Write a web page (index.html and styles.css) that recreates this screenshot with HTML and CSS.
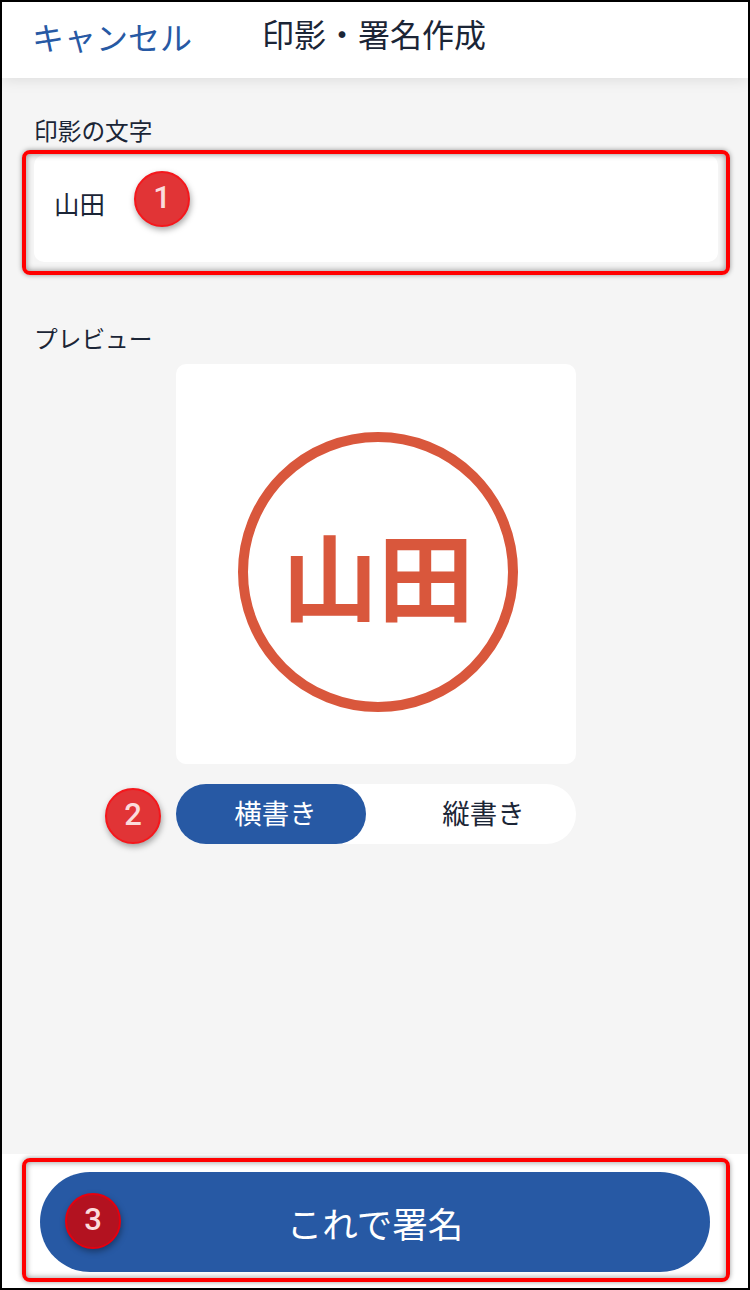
FILE: index.html
```html
<!DOCTYPE html>
<html lang="ja">
  <head>
    <meta charset="UTF-8" />
    <meta name="viewport" content="width=device-width, initial-scale=1.0" />
    <title>印影・署名作成</title>
    <link rel="stylesheet" href="styles.css">
  </head>
  <body>
    <div class="frame">
      <header class="header">
        <span class="cancel">キャンセル</span>
        <h1 class="title">印影・署名作成</h1>
      </header>
      <main class="main">
        <p class="label">印影の文字</p>
        <div class="input">山田</div>
        <p class="label label-preview">プレビュー</p>
        <div class="preview">
          <div class="stamp">山田</div>
        </div>
        <div class="toggle">
          <span class="option active">横書き</span>
          <span class="option">縦書き</span>
        </div>
      </main>
      <footer class="footer">
        <button class="submit">これで署名</button>
      </footer>

      <!-- annotations over the screenshot -->
      <div class="mark mark-input"></div>
      <div class="mark mark-submit"></div>
      <div class="badge badge-1">1</div>
      <div class="badge badge-2">2</div>
      <div class="badge badge-3">3</div>
    </div>
  </body>
</html>
```

FILE: styles.css
```css
* {
  margin: 0;
  padding: 0;
  box-sizing: border-box;
}

body {
  width: 750px;
  height: 1290px;
  overflow: hidden;
  font-family: "Noto Sans CJK JP", "Noto Sans", sans-serif;
  color: #1b2536;
}

.frame {
  position: relative;
  display: flex;
  flex-direction: column;
  width: 750px;
  height: 1290px;
  border: 2px solid #000;
  background-color: #f5f5f5;
}

.header {
  position: relative;
  z-index: 1;
  display: flex;
  align-items: flex-start;
  height: 76px;
  padding: 9px 0 0 30px;
  background-color: #fff;
  box-shadow: 0 2px 14px rgba(0, 0, 0, 0.1);
}
.cancel {
  width: 230px;
  margin-top: 3px;
  font-size: 32px;
  line-height: 44px;
  color: #2759a4;
}
.title {
  font-size: 32px;
  font-weight: 400;
  line-height: 44px;
}

.main {
  flex: 1;
  display: flex;
  flex-direction: column;
  padding-top: 36px;
}
.label {
  margin-left: 32px;
  font-size: 23.7px;
  line-height: 32px;
}
.label-preview {
  margin-top: 60px;
}
.input {
  height: 107px;
  margin: 9px 30px 0 32px;
  padding: 26px 0 0 20px;
  border-radius: 10px;
  background-color: #fff;
  font-size: 25.5px;
  line-height: 44px;
}
.preview {
  display: flex;
  align-items: center;
  justify-content: center;
  width: 400px;
  height: 400px;
  margin: 10px 0 0 174px;
  padding: 16px 0 0 4px;
  border-radius: 10px;
  background-color: #fff;
}
.stamp {
  display: flex;
  align-items: center;
  justify-content: center;
  width: 280px;
  height: 280px;
  padding-top: 2px;
  border: 10px solid #d9573c;
  border-radius: 50%;
  font-size: 96px;
  font-weight: 700;
  line-height: 100px;
  color: #d9573c;
}
.toggle {
  display: flex;
  width: 400px;
  height: 60px;
  margin: 20px 0 0 174px;
  border-radius: 30px;
  background-color: #fff;
}
.option {
  flex: 1;
  padding-left: 25px;
  font-size: 27.5px;
  line-height: 57px;
  text-align: center;
}
.option.active {
  flex: 0 0 190px;
  padding-left: 9px;
  border-radius: 30px;
  background-color: #2759a4;
  color: #fff;
}

.footer {
  height: 134px;
  padding: 18px 38px 16px;
  background-color: #fff;
}
.submit {
  display: block;
  width: 670px;
  height: 100px;
  border: 0;
  border-radius: 50px;
  background-color: #2759a4;
  color: #fff;
  font-family: inherit;
  font-size: 35.5px;
}

.mark {
  position: absolute;
  border: 4px solid #f00;
  border-radius: 8px;
  box-shadow: 0 0 5px rgba(0, 0, 0, 0.4), inset 0 0 6px rgba(0, 0, 0, 0.45);
}
.mark-input {
  left: 20px;
  top: 148px;
  width: 708px;
  height: 125px;
}
.mark-submit {
  left: 20px;
  top: 1156px;
  width: 708px;
  height: 124px;
}

.badge {
  position: absolute;
  width: 56px;
  height: 56px;
  border: 2px solid #f5171c;
  border-radius: 50%;
  background-color: #e13436;
  box-shadow: 1px 3px 6px rgba(0, 0, 0, 0.35);
  color: #fbdcdc;
  font-family: "Roboto", sans-serif;
  font-size: 31px;
  font-weight: 500;
  line-height: 50px;
  text-align: center;
}
.badge-1 {
  left: 132px;
  top: 169px;
}
.badge-2 {
  left: 103px;
  top: 786px;
}
.badge-3 {
  left: 63px;
  top: 1191px;
  border-color: #e6000f;
  background-color: #b31220;
}
```
